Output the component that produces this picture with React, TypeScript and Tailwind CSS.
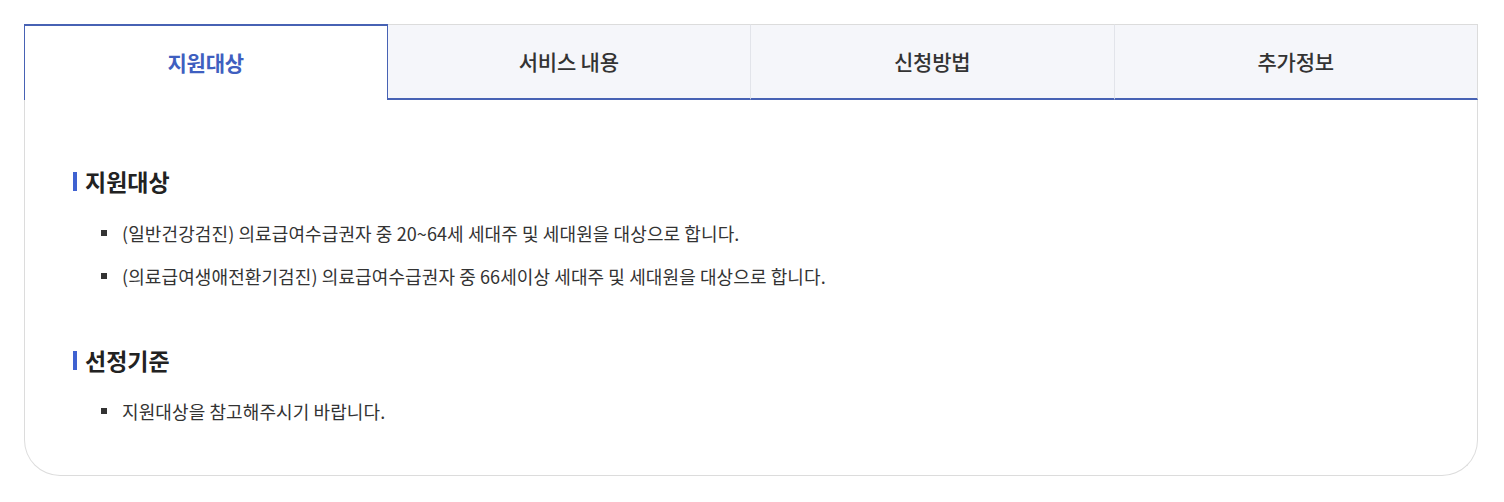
import React from 'react';

const tabs = ['지원대상', '서비스 내용', '신청방법', '추가정보'];

const sections = [
  {
    title: '지원대상',
    items: [
      '(일반건강검진) 의료급여수급권자 중 20~64세 세대주 및 세대원을 대상으로 합니다.',
      '(의료급여생애전환기검진) 의료급여수급권자 중 66세이상 세대주 및 세대원을 대상으로 합니다.',
    ],
  },
  {
    title: '선정기준',
    items: ['지원대상을 참고해주시기 바랍니다.'],
  },
];

export default function App() {
  return (
    <div
      className="min-h-[502px] bg-white pt-[24px] pl-[24px]"
      style={{ fontFamily: '"Noto Sans CJK KR", "Noto Sans", sans-serif' }}
    >
      <div className="w-[1454px]">
        {/* Tabs */}
        <div className="grid grid-cols-4 h-[76px]">
          {tabs.map((t, i) =>
            i === 0 ? (
              <div
                key={t}
                className="flex items-center justify-center bg-white border-t-2 border-l border-r border-[#4762b4] text-[21px] font-bold text-[#3f5fc0] tracking-[-0.2px]"
              >
                {t}
              </div>
            ) : (
              <div
                key={t}
                className={
                  'flex items-center justify-center bg-[#f5f6fa] border-t border-t-[#dcdcdc] border-b-2 border-b-[#4762b4] text-[21px] font-medium text-[#333] tracking-[-0.2px] ' +
                  (i === 3 ? 'border-r border-r-[#dcdcdc]' : 'border-r border-r-[#e2e4ea]')
                }
              >
                {t}
              </div>
            )
          )}
        </div>

        {/* Content */}
        <div className="border-l border-r border-b border-[#dcdcdc] rounded-b-[36px] pl-12 pt-[66px] pb-[51px]">
          {sections.map((s, si) => (
            <div key={s.title} className={si > 0 ? 'mt-[56px]' : ''}>
              <h3 className="flex items-center gap-[8px] text-[23px] leading-[30px] font-bold text-[#222]">
                <span className="w-[4px] h-[19px] bg-[#3f62d1]" />
                {s.title}
              </h3>
              <ul className={'flex flex-col gap-[17px] pl-[28px] ' + (si > 0 ? 'mt-[23px]' : 'mt-[24px]')}>
                {s.items.map((it) => (
                  <li
                    key={it}
                    className="flex items-center gap-[15px] text-[18px] leading-[26px] text-[#333] tracking-[0.1px]"
                  >
                    <span className="w-[6px] h-[6px] bg-[#333] shrink-0" />
                    {it}
                  </li>
                ))}
              </ul>
            </div>
          ))}
        </div>
      </div>
    </div>
  );
}
